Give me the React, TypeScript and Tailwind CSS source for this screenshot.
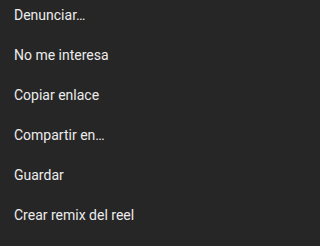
const items = [
  "Denunciar…",
  "No me interesa",
  "Copiar enlace",
  "Compartir en…",
  "Guardar",
  "Crear remix del reel",
];

export default function App() {
  return (
    <div className="min-h-screen w-full bg-[#262626] font-['Roboto',sans-serif]">
      <ul className="flex flex-col gap-5 px-[14px] pt-[5px]">
        {items.map((label) => (
          <li key={label} className="text-[14px] leading-5 text-[#ececec]">
            {label}
          </li>
        ))}
      </ul>
    </div>
  );
}
